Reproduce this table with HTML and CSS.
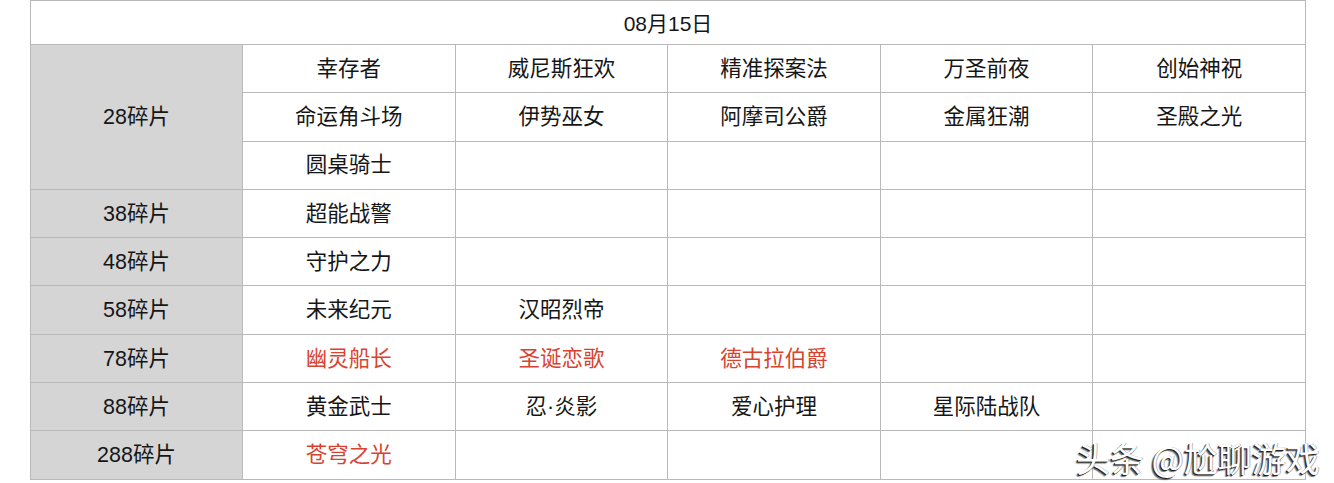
FILE: index.html
```html
<!DOCTYPE html>
<html lang="zh">
<head>
<meta charset="utf-8">
<link rel="stylesheet" href="styles.css">
</head>
<body>
<div class="page">
<table class="sheet">
  <colgroup>
    <col class="c-label"><col class="c1"><col class="c2"><col class="c3"><col class="c4"><col class="c5">
  </colgroup>
  <tr class="head"><td colspan="6">08月15日</td></tr>
  <tr><td class="label" rowspan="3">28碎片</td><td>幸存者</td><td>威尼斯狂欢</td><td>精准探案法</td><td>万圣前夜</td><td>创始神祝</td></tr>
  <tr><td>命运角斗场</td><td>伊势巫女</td><td>阿摩司公爵</td><td>金属狂潮</td><td>圣殿之光</td></tr>
  <tr><td>圆桌骑士</td><td></td><td></td><td></td><td></td></tr>
  <tr><td class="label">38碎片</td><td>超能战警</td><td></td><td></td><td></td><td></td></tr>
  <tr><td class="label">48碎片</td><td>守护之力</td><td></td><td></td><td></td><td></td></tr>
  <tr><td class="label">58碎片</td><td>未来纪元</td><td>汉昭烈帝</td><td></td><td></td><td></td></tr>
  <tr><td class="label">78碎片</td><td class="red">幽灵船长</td><td class="red">圣诞恋歌</td><td class="red">德古拉伯爵</td><td></td><td></td></tr>
  <tr><td class="label">88碎片</td><td>黄金武士</td><td>忍·炎影</td><td>爱心护理</td><td>星际陆战队</td><td></td></tr>
  <tr><td class="label">288碎片</td><td class="red">苍穹之光</td><td></td><td></td><td></td><td></td></tr>
</table>
<div class="watermark">头条 @尬聊游戏</div>
</div>
</body>
</html>
```
FILE: styles.css
```css
html, body {
  margin: 0;
  padding: 0;
  background: #fff;
}
.page {
  position: relative;
  width: 1334px;
  height: 483px;
  overflow: hidden;
  padding-left: 30px;
  box-sizing: border-box;
}
.sheet {
  border-collapse: collapse;
  table-layout: fixed;
  width: 1275px;
  font-family: "Liberation Sans", "Noto Sans CJK SC", sans-serif;
  font-size: 21.5px;
  color: #161616;
}
.c-label { width: 212px; }
.c1, .c2, .c3, .c4, .c5 { width: 212.6px; }
.sheet td {
  border: 1px solid #b9b9b9;
  text-align: center;
  vertical-align: middle;
  padding: 2px 0 0;
  height: 45.3px;
  line-height: 1;
}
.sheet .head td {
  height: 41px;
  font-size: 21px;
}
.sheet td.label {
  background: #d5d5d5;
}
.sheet td.red {
  color: #d8432f;
}
.watermark {
  position: absolute;
  left: 1076px;
  top: 433px;
  font-family: "Noto Sans CJK SC", sans-serif;
  font-size: 34px;
  font-weight: 400;
  color: #fff;
  text-shadow: -1px 1px 0 #222, -2px 2px 1px rgba(0,0,0,0.55), 1px 0 0 rgba(0,0,0,0.3);
  white-space: nowrap;
}
```
